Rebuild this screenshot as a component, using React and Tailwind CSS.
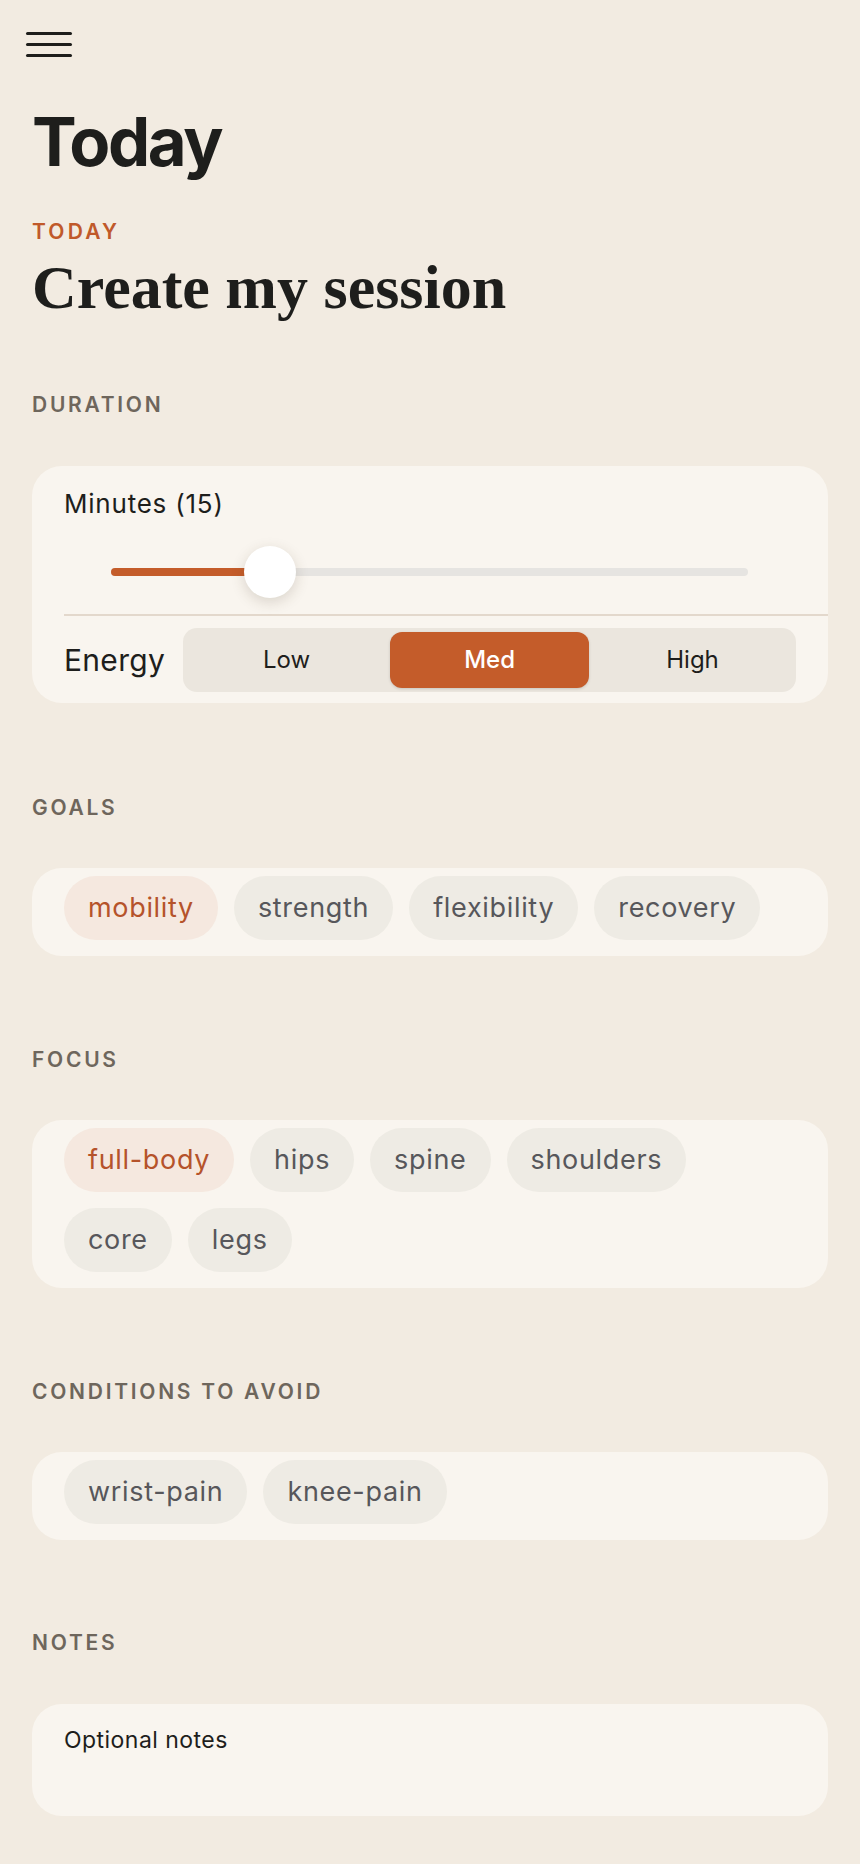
import { useState } from 'react';

const sans = "font-['Inter','Noto_Sans',sans-serif]";

const GOALS = ['mobility', 'strength', 'flexibility', 'recovery'];
const FOCUS = ['full-body', 'hips', 'spine', 'shoulders', 'core', 'legs'];
const AVOID = ['wrist-pain', 'knee-pain'];
const ENERGY = ['Low', 'Med', 'High'];

function SectionLabel({ children, className = '' }) {
  return (
    <div className={`text-[21px] leading-[20px] font-semibold tracking-[0.13em] text-[#6e665c] ${className}`}>
      {children}
    </div>
  );
}

function Chip({ label, active, onClick }) {
  return (
    <button
      onClick={onClick}
      className={`h-16 px-6 rounded-full text-[27px] tracking-[0.025em] ${
        active ? 'bg-[#f5e8df] text-[#b5532b]' : 'bg-[#eeebe4] text-[#57575b]'
      }`}
    >
      {label}
    </button>
  );
}

function ChipGroup({ items, selected, onToggle }) {
  return (
    <div className="mt-[50px] bg-[#f9f5ef] rounded-[30px] pl-8 pr-8 pt-2 pb-4 flex flex-wrap gap-x-4 gap-y-4">
      {items.map((item) => (
        <Chip key={item} label={item} active={selected.includes(item)} onClick={() => onToggle(item)} />
      ))}
    </div>
  );
}

export default function App() {
  const [minutes, setMinutes] = useState(15);
  const [energy, setEnergy] = useState('Med');
  const [goals, setGoals] = useState(['mobility']);
  const [focus, setFocus] = useState(['full-body']);
  const [avoid, setAvoid] = useState([]);

  const toggle = (list, setList) => (item) =>
    setList(list.includes(item) ? list.filter((x) => x !== item) : [...list, item]);

  // slider runs 5..45 minutes
  const pct = ((minutes - 5) / 40) * 100;

  return (
    <div className={`min-h-screen bg-[#f2ebe1] text-[#1e1e1c] px-8 pt-8 pb-12 ${sans}`}>
      {/* menu button */}
      <button className="-ml-[6px] flex flex-col gap-[8px] w-[46px]">
        <span className="block h-[3px] w-full rounded-full bg-[#1e1e1c]" />
        <span className="block h-[3px] w-full rounded-full bg-[#1e1e1c]" />
        <span className="block h-[3px] w-full rounded-full bg-[#1e1e1c]" />
      </button>

      <h1 className="mt-[51px] text-[67px] leading-[68px] font-bold tracking-[-0.035em]">Today</h1>

      <div className="mt-[45px] text-[21px] leading-[22px] font-semibold tracking-[0.15em] text-[#c0592a]">TODAY</div>
      <h2 className="mt-[13px] text-[62px] leading-[62px] font-bold tracking-[0em] font-['Liberation_Serif','Times_New_Roman',serif]">
        Create my session
      </h2>

      <SectionLabel className="mt-[77px]">DURATION</SectionLabel>
      <div className="mt-[51px] bg-[#f9f5ef] rounded-[30px] pl-8 pt-[25px] pb-[11px]">
        <div className="pr-8">
          <div className="text-[26px] leading-[26px] tracking-[0.03em]">Minutes ({minutes})</div>
          <div className="relative mt-[29px] h-[52px] ml-[47px] mr-[48px] flex items-center">
            <div className="h-2 w-full rounded-full bg-[#e6e4e1]" />
            <div className="absolute left-0 h-2 rounded-full bg-[#c45c2a]" style={{ width: `${pct}%` }} />
            <div
              className="absolute top-0 w-[52px] h-[52px] -ml-[26px] rounded-full bg-white shadow-[0_4px_14px_rgba(80,60,40,0.18)]"
              style={{ left: `${pct}%` }}
            />
            <input
              type="range"
              min={5}
              max={45}
              value={minutes}
              onChange={(e) => setMinutes(Number(e.target.value))}
              className="absolute inset-0 w-full opacity-0 cursor-pointer"
            />
          </div>
        </div>
        <div className="mt-4 h-[2px] bg-[#e3d8cc]" />
        <div className="pr-8 mt-3 flex items-center gap-[18px]">
          <span className="text-[30px] leading-[30px] tracking-[0.01em]">Energy</span>
          <div className="flex-1 h-16 bg-[#ebe6de] rounded-[14px] p-1 grid grid-cols-3 gap-1">
            {ENERGY.map((level) => (
              <button
                key={level}
                onClick={() => setEnergy(level)}
                className={`rounded-[12px] text-[24px] ${
                  energy === level
                    ? 'bg-[#c45c2a] text-white font-medium shadow-[0_1px_3px_rgba(0,0,0,0.15)]'
                    : 'text-[#1e1e1c]'
                }`}
              >
                {level}
              </button>
            ))}
          </div>
        </div>
      </div>

      <SectionLabel className="mt-[95px]">GOALS</SectionLabel>
      <ChipGroup items={GOALS} selected={goals} onToggle={toggle(goals, setGoals)} />

      <SectionLabel className="mt-[94px]">FOCUS</SectionLabel>
      <ChipGroup items={FOCUS} selected={focus} onToggle={toggle(focus, setFocus)} />

      <SectionLabel className="mt-[94px]">CONDITIONS TO AVOID</SectionLabel>
      <ChipGroup items={AVOID} selected={avoid} onToggle={toggle(avoid, setAvoid)} />

      <SectionLabel className="mt-[93px]">NOTES</SectionLabel>
      <textarea
        placeholder="Optional notes"
        className="mt-[51px] block w-full h-[112px] resize-none bg-[#f9f5ef] rounded-[30px] px-8 pt-[25px] text-[23px] leading-[23px] tracking-[0.02em] outline-none placeholder:text-[#1e1e1c]"
      />
    </div>
  );
}
